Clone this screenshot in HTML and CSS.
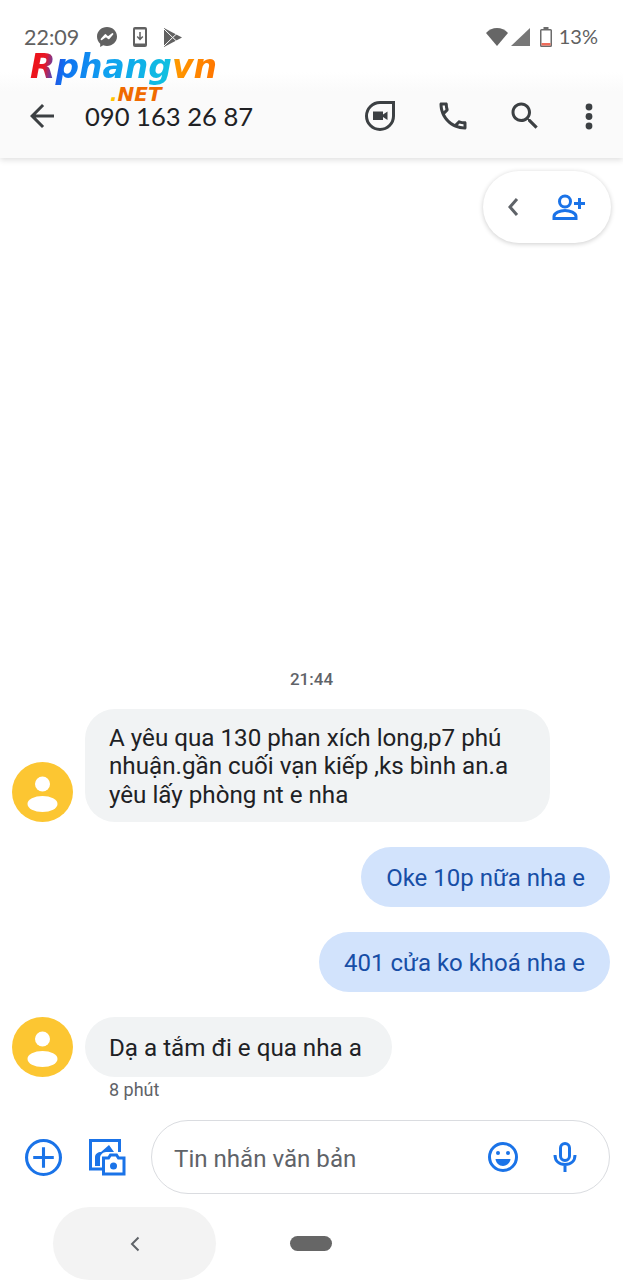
FILE: index.html
```html
<!DOCTYPE html>
<html lang="vi">
<head>
    <meta charset="UTF-8">
    <meta name="viewport" content="width=device-width, initial-scale=1.0">
    <title>090 163 26 87</title>
    <link rel="stylesheet" href="styles.css">
</head>
<body>
    <header class="appbar">
        <div class="status-bar">
            <span class="status-time">22:09</span>
            <svg class="status-icon messenger" viewBox="0 0 20 20"><path fill="#616161" d="M10 0C4.400 0 0 4.100 0 9.600c0 2.900 1.200 5.400 3.200 7.100V20l3-1.700c1.200.4 2.500.6 3.800.6 5.600 0 10-4.100 10-9.400S15.600 0 10 0z"/><path fill="none" stroke="#fff" stroke-width="1.800" stroke-linejoin="round" d="M4.500 12.300 8.300 8l2.600 2.400L15.500 7l-3.800 4.400-2.700-2.300z"/></svg>
            <svg class="status-icon download" viewBox="0 0 14 20"><rect x="0" y="0" width="14" height="20" rx="2" fill="#616161"/><rect x="2" y="2.500" width="10" height="14" fill="#fff"/><path fill="none" stroke="#616161" stroke-width="1.500" d="M7 5v7M4.200 9.500 7 12.400l2.800-2.900"/></svg>
            <svg class="status-icon play" viewBox="0 0 19 19"><path fill="#616161" d="M0 0l18 9.500L0 19z"/><path fill="none" stroke="#fff" stroke-width="1" d="M0 1l8.700 8.500L0 18M8.700 9.500 13 5.500M8.700 9.500l4.300 4"/></svg>
            <span class="status-spacer"></span>
            <svg class="status-icon wifi" viewBox="0 0 22 18"><path fill="#666" d="M11 18 0 5C3 1.800 6.800 0 11 0s8 1.800 11 5z"/></svg>
            <svg class="status-icon signal" viewBox="0 0 19 18"><path fill="#777" d="M19 0v18H0z"/></svg>
            <svg class="status-icon battery" viewBox="0 0 12 20"><path fill="#6b6b6b" d="M3.500 0h5v2h2a1.500 1.500 0 0 1 1.500 1.500v15a1.500 1.500 0 0 1-1.500 1.500h-9A1.500 1.500 0 0 1 0 18.500v-15A1.500 1.500 0 0 1 1.500 2h2z"/><rect x="1.500" y="3.500" width="9" height="15" fill="#fff"/><rect x="1.500" y="16" width="9" height="2.500" fill="#ef6c5a"/></svg>
            <span class="status-battery">13%</span>
        </div>
        <div class="toolbar">
            <svg class="back-arrow" viewBox="0 0 24 24"><path fill="#3c4043" d="M20 11H7.830l5.590-5.590L12 4l-8 8 8 8 1.410-1.410L7.830 13H20z"/></svg>
            <h1 class="contact">090 163 26 87</h1>
            <svg class="duo" viewBox="0 0 30 30"><path fill="none" stroke="#3c4043" stroke-width="3" d="M15 1.500h13.500V15A13.500 13.500 0 1 1 15 1.500z"/><path fill="#3c4043" d="M8 10.500h10v8.500H8zM18 13.500l4.500-3v8.500L18 16z"/></svg>
            <svg class="tool-icon phone" viewBox="0 0 24 24"><path fill="#3c4043" d="M6.540 5c.060.890.210 1.760.450 2.590l-1.200 1.200c-.410-1.200-.670-2.470-.760-3.790h1.510m9.860 12.020c.850.240 1.720.390 2.600.450v1.490c-1.320-.090-2.590-.350-3.800-.750l1.200-1.190M7.500 3H4c-.550 0-1 .450-1 1 0 9.390 7.610 17 17 17 .550 0 1-.450 1-1v-3.490c0-.550-.450-1-1-1-1.240 0-2.450-.200-3.570-.570-.100-.040-.210-.050-.310-.050-.260 0-.510.100-.710.290l-2.200 2.200c-2.830-1.450-5.150-3.760-6.590-6.590l2.200-2.200c.280-.280.360-.670.250-1.020C8.700 6.450 8.500 5.250 8.500 4c0-.550-.450-1-1-1z"/></svg>
            <svg class="tool-icon search" viewBox="0 0 24 24"><path fill="#3c4043" d="M15.500 14h-.790l-.280-.270C15.410 12.590 16 11.110 16 9.500 16 5.910 13.090 3 9.500 3S3 5.910 3 9.500 5.910 16 9.500 16c1.610 0 3.090-.590 4.230-1.570l.270.280v.790l5 4.990L20.490 19l-4.990-5zm-6 0C7.010 14 5 11.990 5 9.500S7.010 5 9.500 5 14 7.010 14 9.500 11.990 14 9.500 14z"/></svg>
            <svg class="dots" viewBox="0 0 8 27"><circle cx="4" cy="4" r="3.400" fill="#3c4043"/><circle cx="4" cy="13.500" r="3.400" fill="#3c4043"/><circle cx="4" cy="23" r="3.400" fill="#3c4043"/></svg>
        </div>
    </header>

    <div class="logo">
        <div class="logo-main">Rphangvn</div>
        <div class="logo-net"><span class="logo-dot">.</span>NET</div>
    </div>

    <div class="add-pill">
        <svg class="pill-chevron" viewBox="0 0 12 20"><path fill="none" stroke="#5f6368" stroke-width="3" d="M10 2 3 10l7 8"/></svg>
        <svg class="pill-person" viewBox="0 0 34 26"><g fill="none" stroke="#1a73e8" stroke-width="3"><circle cx="13" cy="7.500" r="5.500"/><path d="M2 24.500v-2c0-3.500 6-6 11-6s11 2.500 11 6v2z"/><path d="M22 9.500h11M27.500 4v11"/></g></svg>
    </div>

    <main class="thread">
        <div class="timestamp">21:44</div>
        <div class="row">
            <div class="avatar"><svg viewBox="0 0 60 60"><circle cx="30" cy="22" r="7.500" fill="#fff"/><ellipse cx="30" cy="42" rx="15" ry="8" fill="#fff"/></svg></div>
            <div class="bubble received wide">A yêu qua 130 phan xích long,p7 phú nhuận.gần cuối vạn kiếp ,ks bình an.a yêu lấy phòng nt e nha</div>
        </div>
        <div class="row sent-row">
            <div class="bubble sent">Oke 10p nữa nha e</div>
        </div>
        <div class="row sent-row">
            <div class="bubble sent">401 cửa ko khoá nha e</div>
        </div>
        <div class="row">
            <div class="avatar"><svg viewBox="0 0 60 60"><circle cx="30" cy="22" r="7.500" fill="#fff"/><ellipse cx="30" cy="42" rx="15" ry="8" fill="#fff"/></svg></div>
            <div class="bubble received short">Dạ a tắm đi e qua nha a</div>
        </div>
        <div class="msg-age">8 phút</div>
    </main>

    <section class="composer">
        <svg class="plus-icon" viewBox="0 0 36 36"><g fill="none" stroke="#1a73e8" stroke-width="3"><circle cx="18" cy="18" r="16.500"/><path d="M18 8v20M8 18h20"/></g></svg>
        <svg class="gallery-icon" viewBox="0 0 38 38"><path fill="none" stroke="#1a73e8" stroke-width="3" d="M16 31H2.500V2.500h29V14"/><path fill="#1a73e8" d="M7 28v-9c0-3 3-5 6-5l8-7 5 7h-8c-3 0-6 3-6 6v8z"/><path fill="#fff" stroke="#1a73e8" stroke-width="3" d="M15.500 20h5l2-3h6l2 3h5.500v16H15.500z"/><circle cx="25.500" cy="28" r="3.500" fill="#1a73e8"/></svg>
        <div class="input-box">
            <span class="placeholder">Tin nhắn văn bản</span>
            <svg class="emoji-icon" viewBox="0 0 30 30"><circle cx="15" cy="15" r="13.500" fill="none" stroke="#1a73e8" stroke-width="3"/><circle cx="10" cy="11" r="2" fill="#1a73e8"/><circle cx="20" cy="11" r="2" fill="#1a73e8"/><path fill="#1a73e8" d="M7.500 17h15c-.500 4-3.500 7-7.500 7s-7-3-7.500-7z"/></svg>
            <svg class="mic-icon" viewBox="0 0 24 30"><rect x="7.500" y="1.500" width="9" height="17" rx="4.500" fill="none" stroke="#1a73e8" stroke-width="3"/><path fill="none" stroke="#1a73e8" stroke-width="3" d="M2 13c0 6 4 9.500 10 9.500S22 19 22 13M12 22v8"/></svg>
        </div>
    </section>

    <nav class="navbar">
        <div class="nav-back">
            <svg viewBox="0 0 10 16"><path fill="none" stroke="#5f6368" stroke-width="2" d="M8.500 1.500 2 8l6.500 6.500"/></svg>
        </div>
        <div class="nav-home"></div>
    </nav>
</body>
</html>
```

FILE: styles.css
```css
body {
    font-family: Roboto, "Liberation Sans", sans-serif;
    margin: 0;
    width: 623px;
    height: 1280px;
    display: flex;
    flex-direction: column;
    position: relative;
    overflow: hidden;
    background-color: #fff;
}

/* top bar */
.appbar {
    height: 158px;
    flex-shrink: 0;
    background: linear-gradient(#fff 72px, #fafafa 92px);
    box-shadow: 0 2px 6px rgba(0, 0, 0, 0.13);
}
.status-bar {
    height: 78px;
    padding: 0 25px 4px 24px;
    box-sizing: border-box;
    display: flex;
    align-items: center;
}
.status-time {
    font-family: Lato, sans-serif;
    font-size: 21.5px;
    color: #616161;
    margin: 0 18px 1px 0;
}
.status-icon {
    flex-shrink: 0;
}
.messenger {
    width: 20px;
    height: 20px;
}
.download {
    width: 14px;
    height: 20px;
    margin-left: 16px;
}
.play {
    width: 19px;
    height: 19px;
    margin-left: 17px;
}
.status-spacer {
    flex: 1;
}
.wifi {
    width: 22px;
    height: 18px;
}
.signal {
    width: 19px;
    height: 18px;
    margin-left: 3px;
}
.battery {
    width: 12px;
    height: 20px;
    margin-left: 10px;
}
.status-battery {
    font-family: Lato, sans-serif;
    font-size: 20px;
    color: #616161;
    margin: 0 0 2px 7px;
}
.toolbar {
    height: 76px;
    display: flex;
    align-items: center;
    padding: 0 30px 0 24px;
}
.back-arrow {
    width: 36px;
    height: 36px;
}
.contact {
    font-family: Lato, sans-serif;
    font-size: 25.6px;
    font-weight: 400;
    color: #202124;
    margin: 0 auto 0 25px;
}
.duo {
    width: 30px;
    height: 30px;
}
.tool-icon {
    width: 36px;
    height: 36px;
}
.phone {
    margin-left: 40px;
}
.search {
    margin-left: 36px;
}
.dots {
    width: 8px;
    height: 27px;
    margin-left: 42px;
}

/* watermark over the top bar */
.logo {
    position: absolute;
    left: 30px;
    top: 47px;
    width: 190px;
    font-family: "DejaVu Sans", sans-serif;
    font-weight: bold;
    font-style: italic;
}
.logo-main {
    font-size: 33px;
    line-height: 40px;
    letter-spacing: 0;
    background: linear-gradient(100deg, #f01010 0, #e81828 9%, #2a50e0 15%, #1070f0 19%, #10a0f0 40%, #10c0e0 73%, #ff9a00 75%, #ff7000 100%);
    -webkit-background-clip: text;
    background-clip: text;
    color: transparent;
}
.logo-net {
    font-size: 20px;
    line-height: 16px;
    margin: -1px 0 0 80px;
    color: #f06a00;
}
.logo-dot {
    color: #ffc400;
}

/* floating add contact pill */
.add-pill {
    position: absolute;
    left: 483px;
    top: 171px;
    width: 128px;
    height: 72px;
    box-sizing: border-box;
    padding: 0 25px 0 24px;
    border-radius: 36px;
    background-color: #fff;
    box-shadow: 0 1px 5px rgba(0, 0, 0, 0.2);
    display: flex;
    align-items: center;
    justify-content: space-between;
}
.pill-chevron {
    width: 12px;
    height: 20px;
}
.pill-person {
    width: 34px;
    height: 26px;
}

/* messages */
.thread {
    flex: 1;
    display: flex;
    flex-direction: column;
    justify-content: flex-end;
    padding-bottom: 18px;
}
.timestamp {
    text-align: center;
    font-size: 17px;
    font-weight: 500;
    line-height: 22px;
    color: #5f6368;
    margin-bottom: 19px;
}
.row {
    display: flex;
    align-items: flex-end;
    padding: 0 13px 0 12px;
    margin-bottom: 25px;
}
.sent-row {
    justify-content: flex-end;
}
.avatar {
    width: 61px;
    height: 60px;
    border-radius: 50%;
    background-color: #fcc632;
    flex-shrink: 0;
    margin-right: 12px;
}
.avatar svg {
    display: block;
    width: 100%;
    height: 100%;
}
.bubble {
    font-size: 24.2px;
    line-height: 28.5px;
    padding: 17px 25px 14.5px;
    border-radius: 30px;
}
.received {
    background-color: #f1f3f4;
    color: #202124;
}
.wide {
    width: 465px;
    box-sizing: border-box;
    padding: 15px 24px 13px;
}
.short {
    padding-right: 30px;
    padding-left: 24px;
}
.sent {
    font-size: 24px;
    background-color: #d2e3fc;
    color: #174ea6;
}
.msg-age {
    font-size: 18px;
    line-height: 24px;
    color: #5f6368;
    margin: -24px 0 0 109px;
}

/* compose row */
.composer {
    height: 74px;
    flex-shrink: 0;
    display: flex;
    align-items: center;
    padding: 0 13px 0 25px;
}
.plus-icon {
    width: 37px;
    height: 37px;
}
.gallery-icon {
    width: 38px;
    height: 38px;
    margin-left: 26px;
}
.input-box {
    flex: 1;
    height: 74px;
    box-sizing: border-box;
    margin-left: 25px;
    padding: 0 32px 0 22px;
    border: 1.5px solid #dadce0;
    border-radius: 37px;
    display: flex;
    align-items: center;
}
.placeholder {
    flex: 1;
    font-size: 24.1px;
    color: #5f6368;
    padding-top: 3px;
}
.emoji-icon {
    width: 30px;
    height: 30px;
}
.mic-icon {
    width: 24px;
    height: 30px;
    margin-left: 35px;
}

/* system nav */
.navbar {
    height: 73px;
    flex-shrink: 0;
    margin-top: 13px;
    display: flex;
    align-items: center;
}
.nav-back {
    width: 163px;
    height: 73px;
    margin-left: 53px;
    border-radius: 37px;
    background-color: #f3f3f3;
    display: flex;
    align-items: center;
    justify-content: center;
}
.nav-back svg {
    width: 10px;
    height: 16px;
}
.nav-home {
    width: 42px;
    height: 15px;
    margin-left: 74px;
    border-radius: 8px;
    background-color: #666;
}
```
